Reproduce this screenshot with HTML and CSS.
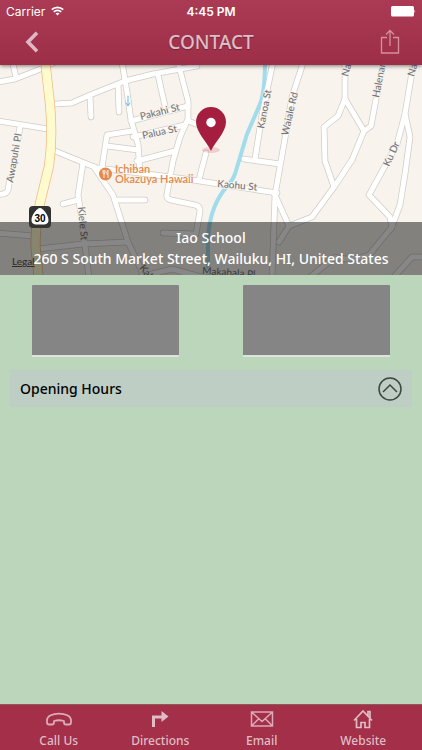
FILE: index.html
```html
<!DOCTYPE html>
<html lang="en">

<head>
    <meta charset="UTF-8">
    <meta name="viewport" content="width=device-width, initial-scale=1.0">
    <title>Contact</title>
    <link rel="stylesheet" href="styles.css">
</head>

<body>
    <header class="header">
        <div class="status-bar">
            <div class="carrier">
                <span>Carrier</span>
                <svg width="13" height="10" viewBox="0 0 13 10" fill="none" stroke="#fff" stroke-width="1.7">
                    <path d="M0.8 3.7a8 8 0 0 1 11.4 0M2.8 5.9a5.2 5.2 0 0 1 7.4 0" />
                    <path d="M6.5 9.6L4.5 7.6a2.9 2.9 0 0 1 4 0z" fill="#fff" stroke="none" />
                </svg>
            </div>
            <span class="time">4:45 PM</span>
            <svg class="battery" width="25" height="11" viewBox="0 0 25 11" fill="#fff">
                <rect width="23" height="10.500" rx="1.5" />
                <path d="M23.500 3.500q1.500 1.700 0 3.500z" />
            </svg>
        </div>
        <div class="title-bar">
            <button class="icon-button" type="button" aria-label="Back">
                <svg width="14" height="22" viewBox="0 0 14 22" fill="none" stroke="#deb9c2" stroke-width="3.600">
                    <path d="M12 1.800L3 11l9 9.200" />
                </svg>
            </button>
            <h1>CONTACT</h1>
            <button class="icon-button" type="button" aria-label="Share">
                <svg width="20" height="26" viewBox="0 0 20 26" fill="none" stroke="#d3909f" stroke-width="1.300">
                    <path d="M7 8.500H1.500v15.500h17V8.500H13M10 17V1.500M6 5.500l4-4 4 4" />
                </svg>
            </button>
        </div>
    </header>

    <main>
        <section class="map">
            <svg class="map-drawing" viewBox="0 65 422 210" preserveAspectRatio="xMidYMid slice">
                <defs>
                    <g id="roads">
                        <path d="M-2 82L15 79 43 68 57 61M12 60L16 77M-2 121L48 129M20 127L18 138M10 178L8 190Q6 195-2 194" />
                        <path d="M55 104L72 103 90 95 125 81 153 74 197 66M90 96L91 117M118 84L119 112" />
                        <path d="M122 62L127 92 131 120 138 144 140 173M132 131L107 135 102 167M107 146L138 150" />
                        <path d="M179 66L188 101V119L180 137 173 161 167 194Q166 199 171 200L195 205Q200 206 200 211L196 234 163 233" />
                        <path d="M131 121L188 106M133 137L185 125M137 161L175 151M158 75L165 106M188 121L204 127" />
                        <path d="M206 153L202 168 199 180M55 151L82 162 97 168 140 173 193 180 277 193" />
                        <path d="M83 163L78 195 80 208 85 245 89 278M63 204L78 200M94 167L113 195 128 242 145 278M115 200H145" />
                        <path d="M38 249L83 244 128 242M-2 233L34 236M140 277L172 269 205 278M184 272V278" />
                        <path d="M273 62L262 115 255 159M244 159L280 164M304 60L292 97 284 144 275 195 272 278" />
                        <path d="M275 195L289 226 279 242M289 226L312 217 334 187 352 160 364 131 345 99V60" />
                        <path d="M345 99L338 116 324 127 325 161 334 187M364 131L371 126 377 94 384 60" />
                        <path d="M414 60L405 114 397 144 369 195 390 217 392 227 369 255Q350 262 335 257L309 278" />
                        <path d="M405 114L410 137 405 174 400 205 391 229M424 257H412L393 278" />
                    </g>
                    <path id="highway" d="M45 60L50 104Q53 138 49 166L40 203Q34 235 36 252L39 280" />
                </defs>
                <rect y="65" width="422" height="210" fill="#f8f4ed" />
                <g fill="none" stroke-linecap="round" stroke-linejoin="round">
                    <use href="#roads" stroke="#d0ccc6" stroke-width="6.500" />
                    <path d="M265 60Q265 92 260 104T247 134L235 174Q232 182 224 190 209 210 208 240V278" stroke="#a0dcec" stroke-width="4" />
                    <use href="#roads" stroke="#fff" stroke-width="5" />
                    <use href="#highway" stroke="#eebc83" stroke-width="10" />
                    <use href="#highway" stroke="#fffbce" stroke-width="8.500" />
                    <path d="M128 96V105M126 103L128 106 130 103" stroke="#65b9eb" stroke-width="1" />
                </g>
                <g class="street-names">
                    <text transform="translate(13 183) rotate(-80)">Awapuhi Pl</text>
                    <text transform="translate(141 120) rotate(-14)">Pakahi St</text>
                    <text transform="translate(143 139) rotate(-12)">Palua St</text>
                    <text transform="translate(264 129) rotate(-79)">Kanoa St</text>
                    <text transform="translate(288 136) rotate(-77)">Waiale Rd</text>
                    <text transform="translate(379 98) rotate(-79)">Halenani</text>
                    <text transform="translate(348 77) rotate(-74)">Nani</text>
                    <text transform="translate(414 77) rotate(-74)">Nani</text>
                    <text transform="translate(389 167) rotate(-65)">Ku Dr</text>
                    <text transform="translate(217 187) rotate(5)">Kaohu St</text>
                    <text transform="translate(78 207) rotate(85)">Kiele St</text>
                    <text transform="translate(139 268) rotate(52)">Kalua</text>
                    <text transform="translate(202 274) rotate(4)">Makahala Pl</text>
                </g>
                <g class="place-name">
                    <circle cx="105.500" cy="174" r="6.500" />
                    <path d="M103 170v2.500q0 1.500 1 1.500t1-1.500V170M104 170v8M108 178v-8q-2 2-1 4.500h1" fill="none" stroke="#fff" stroke-width=".8" />
                    <text x="115" y="173">Ichiban</text>
                    <text x="115" y="183">Okazuya Hawaii</text>
                </g>
                <ellipse cx="211" cy="150" rx="9" ry="3" fill="#d65a70" opacity=".25" />
                <path d="M211 151C207 142 196 132 196 122a15 15 0 0 1 30 0C226 132 215 142 211 151z" fill="#a51e40" />
                <circle cx="211" cy="122.500" r="4.700" fill="#fff" />
            </svg>
            <a class="legal" href="#legal">Legal</a>
            <div class="address">
                <div>Iao School</div>
                <div>260 S South Market Street, Wailuku, HI, United States</div>
            </div>
            <svg class="route-shield" width="24" height="24" viewBox="0 0 24 24">
                <rect x="1" y="1" width="22" height="22" rx="4" fill="#333" />
                <path d="M12 3C15 3 20.500 10 20.500 15S16 19.500 12 19.500 3.500 20 3.500 15 9 3 12 3z" fill="#fff" />
                <text x="12" y="17" text-anchor="middle">30</text>
            </svg>
        </section>

        <div class="photos">
            <div class="photo"></div>
            <div class="photo"></div>
        </div>

        <button class="opening-hours" type="button">
            <span>Opening Hours</span>
            <svg width="24" height="24" viewBox="0 0 24 24" fill="none" stroke="#3d4641" stroke-width="1.500">
                <circle cx="12" cy="12" r="11" />
                <path d="M5 15l7-7 7 7" />
            </svg>
        </button>
    </main>

    <nav class="tab-bar">
        <a href="#call">
            <svg width="26" height="18" viewBox="0 0 26 18" fill="none" stroke="#dbabb7" stroke-width="1.800" stroke-linejoin="round">
                <path d="M1 12.500V10C1 1.500 25 1.500 25 10v2.500q0 2-2 2h-3q-2 0-2-2V11q-5-1.500-10 0v1.500q0 2-2 2H3q-2 0-2-2z" />
            </svg>
            <span>Call Us</span>
        </a>
        <a href="#directions">
            <svg width="18" height="18" viewBox="0 0 18 18">
                <path d="M2.500 17V7H11" fill="none" stroke="#dfbdc6" stroke-width="3" />
                <path d="M10.500 1L17.500 6.500 10.500 12z" fill="#dfbdc6" />
            </svg>
            <span>Directions</span>
        </a>
        <a href="#email">
            <svg width="24" height="18" viewBox="0 0 24 18" fill="none" stroke="#dbabb7" stroke-width="1.500">
                <path d="M1.500 2h21v14h-21zM2 2.500l10 9 10-9M2 15.500l7-7M22 15.500l-7-7" />
            </svg>
            <span>Email</span>
        </a>
        <a href="#website">
            <svg width="22" height="20" viewBox="0 0 22 20" fill="none" stroke="#dfbdc6" stroke-width="1.700">
                <path d="M2 11.500L11 2l9 9.500M16 7V2.500h2v7M4.500 10v8.500h4.500v-5h4v5h4.500V10" />
            </svg>
            <span>Website</span>
        </a>
    </nav>
</body>

</html>
```

FILE: styles.css
```css
* {
    box-sizing: border-box;
}

body {
    margin: 0;
    min-height: 100vh;
    display: flex;
    flex-direction: column;
    background-color: #bcd6bc;
    font-family: "Noto Sans", "Open Sans", sans-serif;
    font-size: 14px;
    font-weight: 500;
}

button {
    border: none;
    background: none;
    font: inherit;
    cursor: pointer;
}

.header {
    position: relative;
    z-index: 1;
    background: linear-gradient(#ab3b55, #9d2e48);
    box-shadow: 0 1px 4px rgba(0, 0, 0, 0.5);
}

.status-bar {
    display: grid;
    grid-template-columns: 1fr auto 1fr;
    align-items: center;
    height: 22px;
    padding: 0 6px;
    color: #fff;
    font-family: Inter, sans-serif;
    font-size: 12px;
    font-weight: 400;
}

.carrier {
    display: flex;
    align-items: center;
    gap: 6px;
}

.time {
    font-weight: 600;
}

.battery {
    justify-self: end;
}

.title-bar {
    display: flex;
    align-items: center;
    justify-content: space-between;
    height: 43px;
    padding: 0 16px 3px;
}

.title-bar h1 {
    margin: 0;
    color: #dfbdc6;
    font-size: 19px;
    font-weight: 500;
    text-shadow: 0 1px 1px rgba(0, 0, 0, 0.3);
}

.icon-button {
    display: flex;
    align-items: center;
    justify-content: center;
    width: 32px;
    height: 40px;
    padding: 0;
}

main {
    flex: 1;
}

.map {
    position: relative;
    height: 210px;
    overflow: hidden;
}

.map-drawing {
    display: block;
    width: 100%;
    height: 100%;
}

.street-names {
    fill: #77757a;
    stroke: #f8f4ed;
    stroke-width: 2px;
    paint-order: stroke;
    font-family: Lato, sans-serif;
    font-size: 10px;
    font-weight: 500;
}

.place-name {
    fill: #e58a4c;
    font-family: Lato, sans-serif;
    font-size: 11px;
    font-weight: 600;
}

.route-shield {
    position: absolute;
    left: 28px;
    top: 140px;
    font-family: "Liberation Sans", sans-serif;
    font-size: 10px;
    font-weight: 700;
}

.legal {
    position: absolute;
    left: 12px;
    bottom: 8px;
    color: #555;
    font-family: Lato, sans-serif;
    font-size: 10px;
}

.address {
    position: absolute;
    left: 0;
    right: 0;
    bottom: 0;
    padding: 5px 0 6px;
    background-color: rgba(0, 0, 0, 0.47);
    color: #fff;
    line-height: 21px;
    text-align: center;
}

.photos {
    display: grid;
    grid-template-columns: 1fr 1fr;
    gap: 64px;
    padding: 10px 32px 0;
}

.photo {
    height: 72px;
    background-color: #858585;
    border-bottom: 2px solid #dce5dc;
    border-radius: 1px;
}

.opening-hours {
    display: flex;
    align-items: center;
    justify-content: space-between;
    width: calc(100% - 20px);
    height: 37px;
    margin: 13px 10px 0;
    padding: 0 10px;
    background-color: #bfcec4;
    color: #000;
}

.tab-bar {
    display: flex;
    justify-content: space-around;
    height: 46px;
    padding: 0 8px;
    background-color: #a32f49;
    border-top: 1px solid #8e5a58;
}

.tab-bar a {
    display: flex;
    flex-direction: column;
    align-items: center;
    flex: 1;
    color: #dfbdc6;
    font-size: 12px;
    line-height: 16px;
    text-decoration: none;
}

.tab-bar svg {
    height: 20px;
    margin: 4px 0;
}
```
